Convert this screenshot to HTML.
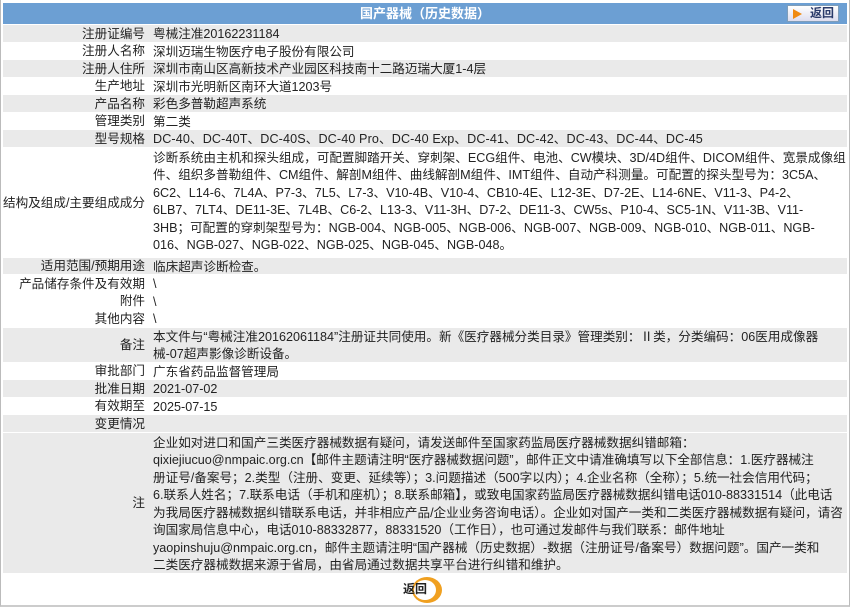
<!DOCTYPE html>
<html><head><meta charset="utf-8"><style>
*{margin:0;padding:0;box-sizing:border-box}
body{width:850px;height:611px;background:#fff;font-family:"Liberation Sans","Noto Sans CJK SC",sans-serif;font-size:12.6px;color:#222;position:relative;overflow:hidden}
.frame{position:absolute;left:0;top:0;width:850px;height:607px;border:1px solid #bbb;border-top:none;border-bottom:2px solid #ccc}
.hd{position:absolute;left:3px;top:3px;width:844px;height:21px;background:#6c9fd3;color:#fff;font-weight:bold;text-align:center;line-height:21px;font-size:13px}
.back{position:absolute;right:8px;top:2px;width:52px;height:17px;background:linear-gradient(#fff,#dde);border:1px solid #7f9db9;color:#2a3a6a;font-size:12px;line-height:15px;text-align:left;padding-left:22px}
.back:before{content:"";position:absolute;left:5px;top:3px;width:0;height:0;border-left:9px solid #f08a10;border-top:5px solid transparent;border-bottom:5px solid transparent}
.tb{position:absolute;left:3px;top:25px;width:844px}
.r{display:flex;border-bottom:1px solid #fff;height:17.5px;overflow:hidden}
.r.g{background:#eaeaea}
.l{width:147px;text-align:right;padding-right:5px;flex:none;display:flex;align-items:center;justify-content:flex-end;white-space:nowrap;line-height:16px;padding-top:1px}
.v{flex:1;padding-left:3px;white-space:nowrap;line-height:16.5px;overflow:hidden;padding-top:1px}
.lat{letter-spacing:0.12px}
.m{height:110px}.m .v{line-height:17.6px;padding-top:2px}
.b{height:35px}.b .v{line-height:17px}
.n{height:141px}.n .v{line-height:17.5px;padding-top:2px}
.btm{position:absolute;left:403px;top:580px;font-weight:bold;font-size:12px;line-height:18px;z-index:2}
.ring{position:absolute;left:412px;top:577px;width:30px;height:26px;border-radius:50%;background:#f0a020}
.ring:after{content:"";position:absolute;left:2px;top:3px;width:22px;height:20px;border-radius:50%;background:#fff}
</style></head><body>
<div class="frame"></div>
<div class="hd">国产器械（历史数据）<div class="back">返回</div></div>
<div class="tb">
<div class="r g"><div class="l">注册证编号</div><div class="v">粤械注准20162231184</div></div>
<div class="r"><div class="l">注册人名称</div><div class="v">深圳迈瑞生物医疗电子股份有限公司</div></div>
<div class="r g"><div class="l">注册人住所</div><div class="v">深圳市南山区高新技术产业园区科技南十二路迈瑞大厦1-4层</div></div>
<div class="r"><div class="l">生产地址</div><div class="v">深圳市光明新区南环大道1203号</div></div>
<div class="r g"><div class="l">产品名称</div><div class="v">彩色多普勒超声系统</div></div>
<div class="r"><div class="l">管理类别</div><div class="v">第二类</div></div>
<div class="r g"><div class="l">型号规格</div><div class="v lat">DC-40、DC-40T、DC-40S、DC-40 Pro、DC-40 Exp、DC-41、DC-42、DC-43、DC-44、DC-45</div></div>
<div class="r m"><div class="l">结构及组成/主要组成成分</div><div class="v">诊断系统由主机和探头组成，可配置脚踏开关、穿刺架、ECG组件、电池、CW模块、3D/4D组件、DICOM组件、宽景成像组<br>件、组织多普勒组件、CM组件、解剖M组件、曲线解剖M组件、IMT组件、自动产科测量。可配置的探头型号为：3C5A、<br>6C2、L14-6、7L4A、P7-3、7L5、L7-3、V10-4B、V10-4、CB10-4E、L12-3E、D7-2E、L14-6NE、V11-3、P4-2、<br>6LB7、7LT4、DE11-3E、7L4B、C6-2、L13-3、V11-3H、D7-2、DE11-3、CW5s、P10-4、SC5-1N、V11-3B、V11-<br>3HB；可配置的穿刺架型号为：NGB-004、NGB-005、NGB-006、NGB-007、NGB-009、NGB-010、NGB-011、NGB-<br>016、NGB-027、NGB-022、NGB-025、NGB-045、NGB-048。</div></div>
<div class="r g"><div class="l">适用范围/预期用途</div><div class="v">临床超声诊断检查。</div></div>
<div class="r"><div class="l">产品储存条件及有效期</div><div class="v">\</div></div>
<div class="r"><div class="l">附件</div><div class="v">\</div></div>
<div class="r"><div class="l">其他内容</div><div class="v">\</div></div>
<div class="r g b"><div class="l">备注</div><div class="v">本文件与“粤械注准20162061184”注册证共同使用。新《医疗器械分类目录》管理类别：Ⅱ类，分类编码：06医用成像器<br>械-07超声影像诊断设备。</div></div>
<div class="r"><div class="l">审批部门</div><div class="v">广东省药品监督管理局</div></div>
<div class="r g"><div class="l">批准日期</div><div class="v">2021-07-02</div></div>
<div class="r"><div class="l">有效期至</div><div class="v">2025-07-15</div></div>
<div class="r g"><div class="l">变更情况</div><div class="v">&nbsp;</div></div>
<div class="r g n"><div class="l">注</div><div class="v">企业如对进口和国产三类医疗器械数据有疑问，请发送邮件至国家药监局医疗器械数据纠错邮箱：<br>qixiejiucuo@nmpaic.org.cn【邮件主题请注明“医疗器械数据问题”，邮件正文中请准确填写以下全部信息：1.医疗器械注<br>册证号/备案号；2.类型（注册、变更、延续等）；3.问题描述（500字以内）；4.企业名称（全称）；5.统一社会信用代码；<br>6.联系人姓名；7.联系电话（手机和座机）；8.联系邮箱】，或致电国家药监局医疗器械数据纠错电话010-88331514（此电话<br>为我局医疗器械数据纠错联系电话，并非相应产品/企业业务咨询电话）。企业如对国产一类和二类医疗器械数据有疑问，请咨<br>询国家局信息中心，电话010-88332877，88331520（工作日），也可通过发邮件与我们联系：邮件地址<br>yaopinshuju@nmpaic.org.cn，邮件主题请注明“国产器械（历史数据）-数据（注册证号/备案号）数据问题”。国产一类和<br>二类医疗器械数据来源于省局，由省局通过数据共享平台进行纠错和维护。</div></div>
</div>
<div class="ring"></div>
<div class="btm">返回</div>
</body></html>
